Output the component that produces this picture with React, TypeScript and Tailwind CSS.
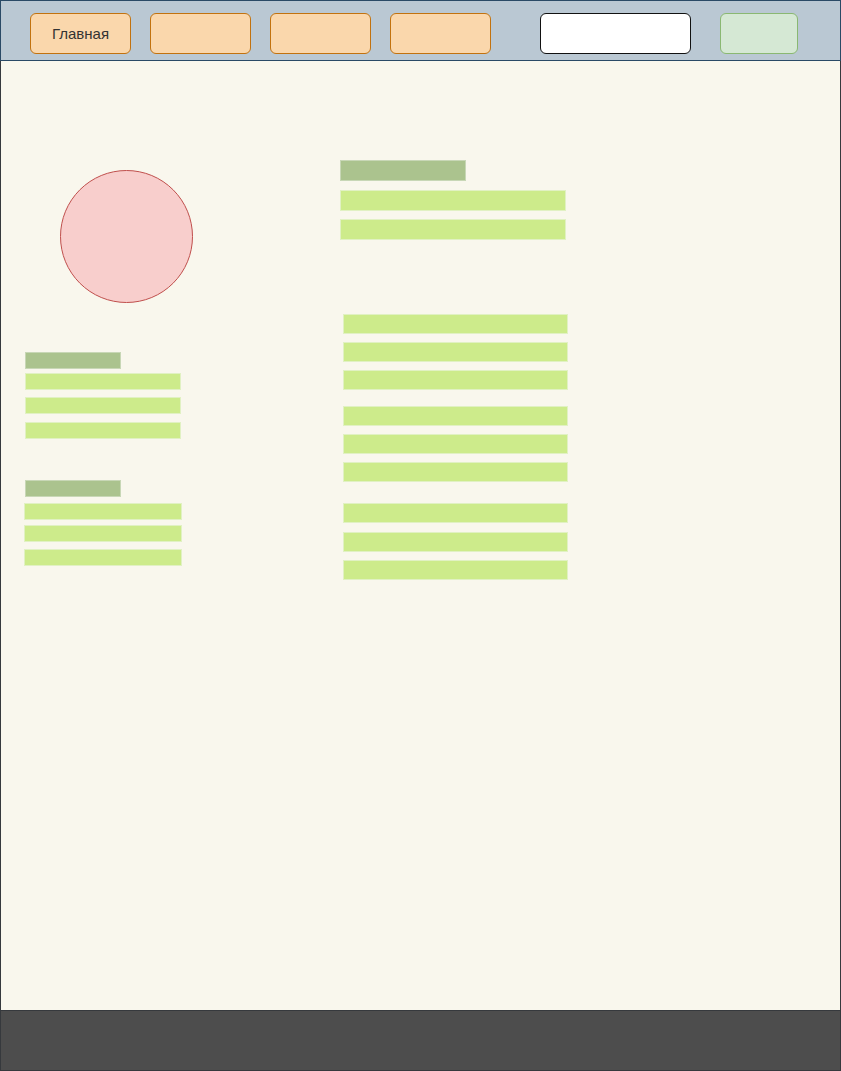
import React from "react";

export default function App() {
  const bar = "bg-[#cdeb8b] border border-[#e1f1c3]";
  const head = "bg-[#abc38e] border border-[#c8d7b6]";
  return (
    <div
      className="w-[841px] h-[1071px] flex flex-col bg-white"
      style={{ fontFamily: '"Liberation Sans", Arial, sans-serif' }}
    >
      {/* Header */}
      <div className="h-[61px] shrink-0 bg-[#bac8d3] border border-[#2a4a66] flex items-start pt-[12px] pl-[29px]">
        <div className="w-[101px] h-[41px] rounded-[6px] bg-[#fad7ac] border border-[#c2720f] flex items-center justify-center pt-[2px] text-[15px] text-[#333333]">
          Главная
        </div>
        <div className="ml-[19px] w-[101px] h-[41px] rounded-[6px] bg-[#fad7ac] border border-[#c2720f]" />
        <div className="ml-[19px] w-[101px] h-[41px] rounded-[6px] bg-[#fad7ac] border border-[#c2720f]" />
        <div className="ml-[19px] w-[101px] h-[41px] rounded-[6px] bg-[#fad7ac] border border-[#c2720f]" />
        <div className="ml-[49px] w-[151px] h-[41px] rounded-[6px] bg-white border border-[#111111]" />
        <div className="ml-[29px] w-[78px] h-[41px] rounded-[6px] bg-[#d5e8d4] border border-[#8ab872]" />
      </div>

      {/* Main */}
      <div className="h-[949px] shrink-0 bg-[#f9f7ed] border-x border-[#36393d] flex">
        {/* Left column */}
        <div className="w-[339px] flex flex-col items-start">
          <div className="ml-[59px] mt-[109px] w-[133px] h-[133px] rounded-full bg-[#f8cecc] border border-[#c0504d]" />

          <div className={`ml-[24px] mt-[49px] w-[96px] h-[17px] ${head}`} />
          <div className={`ml-[24px] mt-[4px] w-[156px] h-[17px] ${bar}`} />
          <div className={`ml-[24px] mt-[7px] w-[156px] h-[17px] ${bar}`} />
          <div className={`ml-[24px] mt-[8px] w-[156px] h-[17px] ${bar}`} />

          <div className={`ml-[24px] mt-[41px] w-[96px] h-[17px] ${head}`} />
          <div className={`ml-[23px] mt-[6px] w-[158px] h-[17px] ${bar}`} />
          <div className={`ml-[23px] mt-[5px] w-[158px] h-[17px] ${bar}`} />
          <div className={`ml-[23px] mt-[7px] w-[158px] h-[17px] ${bar}`} />
        </div>

        {/* Right column */}
        <div className="flex flex-col items-start">
          <div className={`mt-[99px] w-[126px] h-[21px] ${head}`} />
          <div className={`mt-[9px] w-[226px] h-[21px] ${bar}`} />
          <div className={`mt-[8px] w-[226px] h-[21px] ${bar}`} />

          <div className="ml-[3px] flex flex-col items-start">
            <div className={`mt-[74px] w-[225px] h-[20px] ${bar}`} />
            <div className={`mt-[8px] w-[225px] h-[20px] ${bar}`} />
            <div className={`mt-[8px] w-[225px] h-[20px] ${bar}`} />
            <div className={`mt-[16px] w-[225px] h-[20px] ${bar}`} />
            <div className={`mt-[8px] w-[225px] h-[20px] ${bar}`} />
            <div className={`mt-[8px] w-[225px] h-[20px] ${bar}`} />
            <div className={`mt-[21px] w-[225px] h-[20px] ${bar}`} />
            <div className={`mt-[9px] w-[225px] h-[20px] ${bar}`} />
            <div className={`mt-[8px] w-[225px] h-[20px] ${bar}`} />
          </div>
        </div>
      </div>

      {/* Footer */}
      <div className="h-[61px] shrink-0 bg-[#4d4d4d] border border-[#36393d]" />
    </div>
  );
}
